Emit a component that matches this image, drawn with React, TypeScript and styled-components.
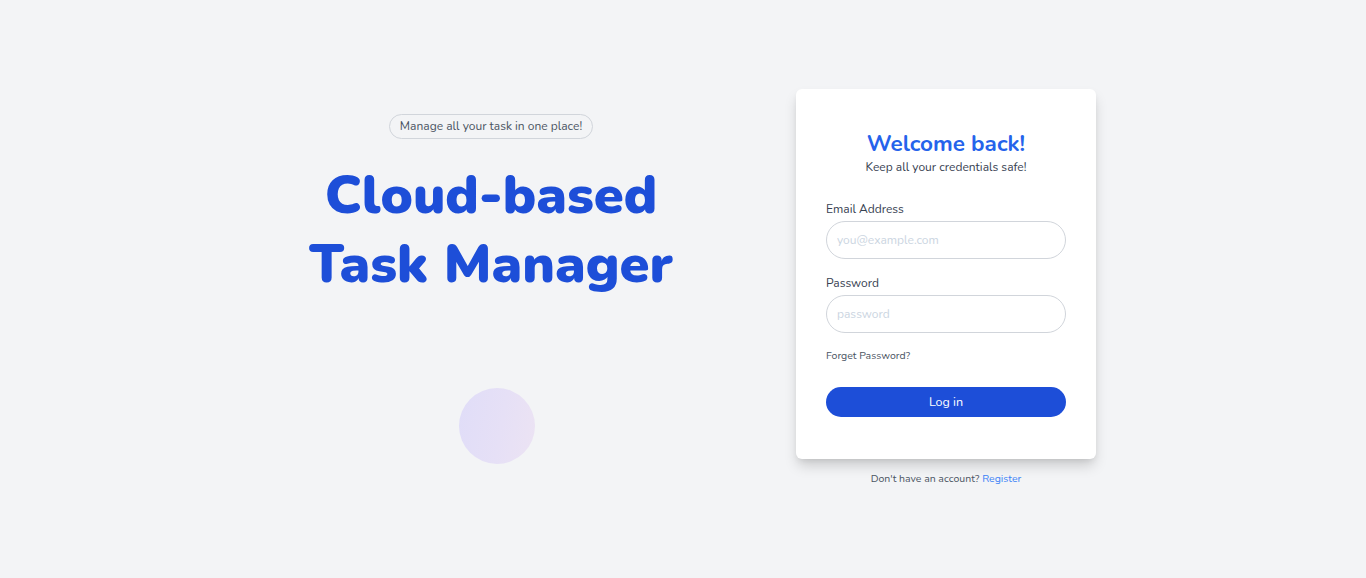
import React, {useState} from 'react'
import styled, {createGlobalStyle} from 'styled-components'

const GlobalStyle = createGlobalStyle`
    * {
        box-sizing: border-box;
    }
    html, body {
        margin: 0;
        padding: 0;
        background: #f3f4f6;
    }
    body {
        font-family: 'Nunito', 'Lato', 'Open Sans', sans-serif;
        color: #374151;
    }
`

const Page = styled.main`
    width: 100%;
    height: 578px;
    display: flex;
    align-items: center;
    justify-content: center;
    gap: 84px;
`

const Hero = styled.section`
    width: 442px;
    display: flex;
    flex-direction: column;
    align-items: center;
`

const Badge = styled.span`
    display: inline-block;
    height: 25px;
    padding: 0 10px;
    border: 1px solid #d1d5db;
    border-radius: 999px;
    font-size: 12px;
    line-height: 23px;
    color: #4b5563;
`

const Title = styled.h1`
    margin: 22px 0 0;
    font-size: 54px;
    font-weight: 900;
    line-height: 69px;
    text-align: center;
    color: #1d4ed8;
    letter-spacing: 0;
`

const Blob = styled.div`
    width: 76px;
    height: 76px;
    margin: 89px 0 0 12px;
    border-radius: 50%;
    background: linear-gradient(100deg, #e0ddf8 0%, #e6e0f6 55%, #ece3f3 100%);
`

const Side = styled.section`
    width: 300px;
    display: flex;
    flex-direction: column;
    align-items: center;
    margin-bottom: 4px;
`

const Card = styled.form`
    width: 300px;
    padding: 40px 30px 42px;
    background: #fff;
    border-radius: 6px;
    box-shadow: 0 8px 14px -2px rgba(0, 0, 0, 0.18),
        0 3px 6px -2px rgba(0, 0, 0, 0.08);
    display: flex;
    flex-direction: column;
`

const Heading = styled.h2`
    margin: 0;
    font-size: 22.5px;
    font-weight: 700;
    line-height: 30px;
    text-align: center;
    color: #2563eb;
`

const Sub = styled.p`
    margin: 0;
    font-size: 12px;
    line-height: 16px;
    text-align: center;
    color: #374151;
`

const Field = styled.label`
    display: flex;
    flex-direction: column;
    gap: 4px;
    margin-top: ${({$first}: {$first?: boolean}) => ($first ? '26px' : '16px')};
    font-size: 12px;
    line-height: 16px;
    color: #374151;
`

const Input = styled.input`
    width: 100%;
    height: 38px;
    padding: 0 10px;
    border: 1px solid #d1d5db;
    border-radius: 999px;
    outline: none;
    font-family: inherit;
    font-size: 12px;
    color: #374151;
    &::placeholder {
        color: #cbd5e1;
    }
`

const Forgot = styled.span`
    margin-top: 16px;
    font-size: 10.5px;
    line-height: 14px;
    color: #4b5563;
    cursor: pointer;
`

const Submit = styled.button`
    margin-top: 24px;
    height: 30px;
    border: none;
    border-radius: 999px;
    background: #1d4ed8;
    color: #fff;
    font-family: inherit;
    font-size: 12.5px;
    cursor: pointer;
`

const Footer = styled.p`
    margin: 13px 0 0;
    font-size: 10.5px;
    line-height: 14px;
    color: #4b5563;
    a {
        color: #3b82f6;
        text-decoration: none;
    }
`

const App = () => {
    const [email, setEmail] = useState('')
    const [password, setPassword] = useState('')

    return (
        <>
            <GlobalStyle />
            <Page>
                <Hero>
                    <Badge>Manage all your task in one place!</Badge>
                    <Title>
                        Cloud-based
                        <br />
                        Task Manager
                    </Title>
                    <Blob />
                </Hero>
                <Side>
                    <Card onSubmit={(e) => e.preventDefault()}>
                        <Heading>Welcome back!</Heading>
                        <Sub>Keep all your credentials safe!</Sub>
                        <Field $first>
                            Email Address
                            <Input
                                type="email"
                                placeholder="you@example.com"
                                value={email}
                                onChange={(e) => setEmail(e.target.value)}
                            />
                        </Field>
                        <Field>
                            Password
                            <Input
                                type="password"
                                placeholder="password"
                                value={password}
                                onChange={(e) => setPassword(e.target.value)}
                            />
                        </Field>
                        <Forgot>Forget Password?</Forgot>
                        <Submit type="submit">Log in</Submit>
                    </Card>
                    <Footer>
                        Don't have an account? <a href="#">Register</a>
                    </Footer>
                </Side>
            </Page>
        </>
    )
}

export default App
